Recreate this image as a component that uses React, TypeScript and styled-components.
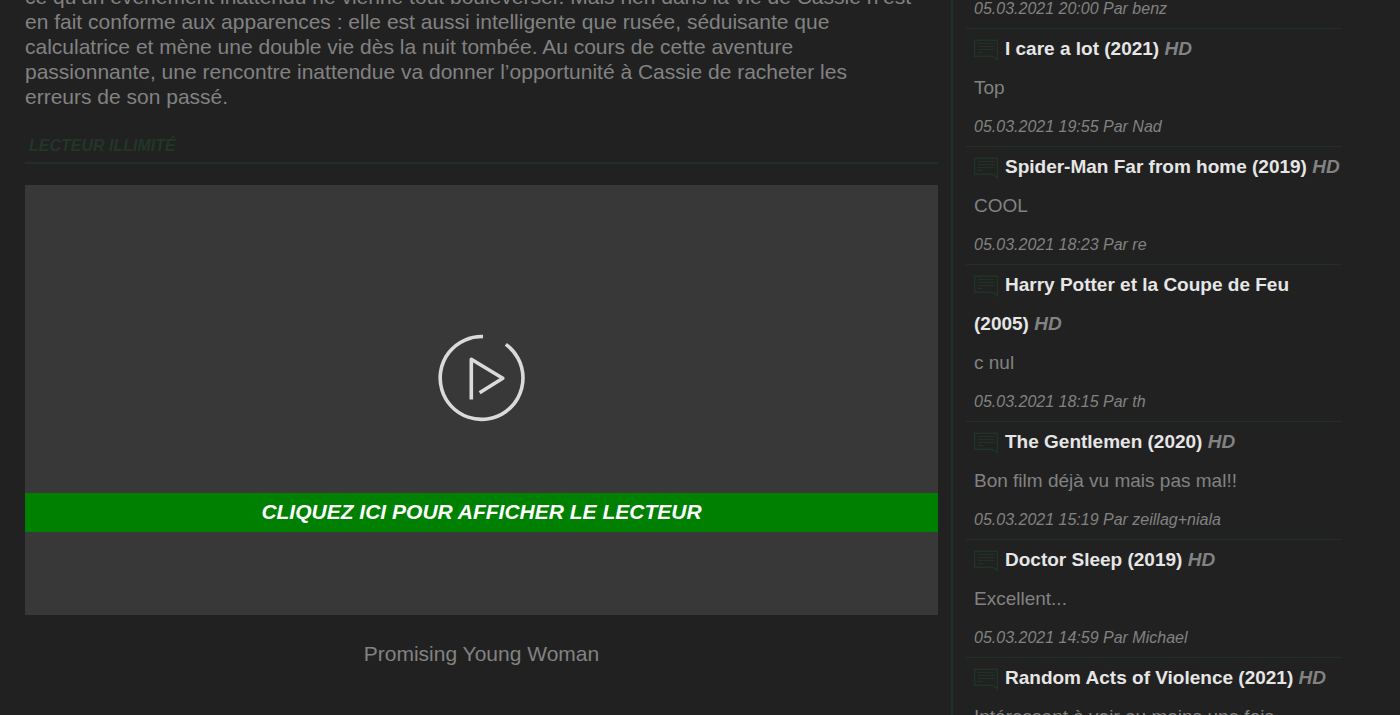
import React from "react";
import styled, { createGlobalStyle } from "styled-components";

const GlobalStyle = createGlobalStyle`
  * { box-sizing: border-box; }
  body {
    margin: 0;
    background: #212121;
    color: #828282;
    font-family: "Liberation Sans", Arial, sans-serif;
  }
`;

const green = "#203024";

const Viewport = styled.div`
  height: 100vh;
  overflow: hidden;
`;

const Page = styled.div`
  display: flex;
  margin-top: -16px;
  padding: 0 58px 0 25px;
`;

const Main = styled.main`
  flex: 1;
  min-width: 0;
  padding-right: 13px;
`;

const Synopsis = styled.p`
  margin: 0 0 25px;
  font-size: 21px;
  line-height: 25px;
`;

const SectionTitle = styled.h2`
  margin: 0 0 21px;
  padding: 0 4px 4px;
  border-bottom: 2px solid ${green};
  color: #223629;
  font-size: 16px;
  font-style: italic;
  line-height: 24px;
  text-transform: uppercase;
`;

const Player = styled.button`
  display: flex;
  flex-direction: column;
  align-items: center;
  width: 100%;
  padding: 149px 0 83px;
  border: 0;
  background: #383838;
  font-family: inherit;
  cursor: pointer;
`;

const PlayerLabel = styled.span`
  width: 100%;
  margin-top: 71px;
  padding-bottom: 2px;
  background: #008000;
  color: #fff;
  font-size: 21px;
  font-style: italic;
  font-weight: bold;
  line-height: 37px;
  text-transform: uppercase;
`;

const Caption = styled.p`
  margin: 26px 0;
  font-size: 21px;
  line-height: 25px;
  text-align: center;
`;

const Sidebar = styled.aside`
  flex: 0 0 391px;
  padding: 5px 0 0 13px;
  border-left: 2px solid ${green};
`;

const CommentList = styled.ul`
  margin: 0;
  padding: 0;
  list-style: none;
`;

const Comment = styled.li`
  padding: 0 0 0 8px;
  border-bottom: 1px solid ${green};
  font-size: 19px;
  line-height: 39px;
`;

const CommentTitle = styled.h3`
  margin: 0;
  font-size: inherit;
  line-height: inherit;
`;

const MovieLink = styled.a`
  color: #e6e6e6;
  text-decoration: none;
`;

const CommentText = styled.p`
  margin: 0;
`;

const Meta = styled.p`
  margin: 0;
  font-size: 16px;
  font-style: italic;
`;

const IconSvg = styled.svg`
  margin-right: 7px;
  vertical-align: middle;
`;

const CommentIcon = () => (
  <IconSvg width="24" height="22" viewBox="0 0 24 22" fill="none" stroke="#203327" aria-hidden="true">
    <path d="M.7 1.3H23.3V20.6L18.6 17.3H.7Z" strokeWidth="1.4" />
    <path d="M4 4.5H20.5M4 7.5H20.5M4 10.5H20.5M4 13.5H9" strokeWidth="1.2" />
  </IconSvg>
);

const PlayIcon = () => (
  <svg width="88" height="88" viewBox="0 0 88 88" fill="none" stroke="#dadada" strokeWidth="3.6" aria-hidden="true">
    <path d="M45 2.6A41.4 41.4 0 1 0 67.8 10.4" />
    <path d="M33.3 65.5V25.3L64.8 44.2L41.6 58.8" strokeLinejoin="round" />
  </svg>
);

type Entry = { title?: string; text?: string; meta: string };

const entries: Entry[] = [
  { meta: "05.03.2021 20:00 Par benz" },
  { title: "I care a lot (2021)", text: "Top", meta: "05.03.2021 19:55 Par Nad" },
  { title: "Spider-Man Far from home (2019)", text: "COOL", meta: "05.03.2021 18:23 Par re" },
  { title: "Harry Potter et la Coupe de Feu (2005)", text: "c nul", meta: "05.03.2021 18:15 Par th" },
  { title: "The Gentlemen (2020)", text: "Bon film déjà vu mais pas mal!!", meta: "05.03.2021 15:19 Par zeillag+niala" },
  { title: "Doctor Sleep (2019)", text: "Excellent...", meta: "05.03.2021 14:59 Par Michael" },
  { title: "Random Acts of Violence (2021)", text: "Intéressant à voir au moins une fois", meta: "" },
];

export default function App() {
  return (
    <Viewport>
      <GlobalStyle />
      <Page>
        <Main>
          <Synopsis>
            ce qu’un événement inattendu ne vienne tout bouleverser. Mais rien dans la vie de Cassie n’est
            <br />
            en fait conforme aux apparences : elle est aussi intelligente que rusée, séduisante que
            <br />
            calculatrice et mène une double vie dès la nuit tombée. Au cours de cette aventure
            <br />
            passionnante, une rencontre inattendue va donner l’opportunité à Cassie de racheter les
            <br />
            erreurs de son passé.
          </Synopsis>
          <SectionTitle>Lecteur illimité</SectionTitle>
          <Player type="button">
            <PlayIcon />
            <PlayerLabel>Cliquez ici pour afficher le lecteur</PlayerLabel>
          </Player>
          <Caption>Promising Young Woman</Caption>
        </Main>
        <Sidebar>
          <CommentList>
            {entries.map((entry, index) => (
              <Comment key={index}>
                {entry.title && (
                  <CommentTitle>
                    <CommentIcon />
                    <MovieLink href="#">{entry.title}</MovieLink> <em>HD</em>
                  </CommentTitle>
                )}
                {entry.text && <CommentText>{entry.text}</CommentText>}
                {entry.meta && <Meta>{entry.meta}</Meta>}
              </Comment>
            ))}
          </CommentList>
        </Sidebar>
      </Page>
    </Viewport>
  );
}
